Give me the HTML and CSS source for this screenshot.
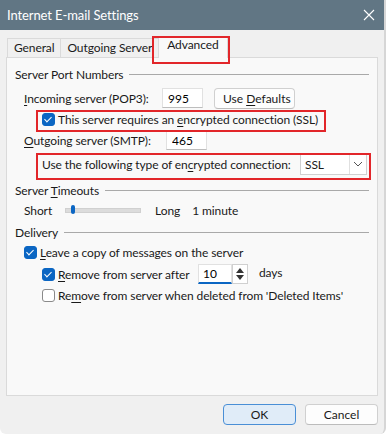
FILE: index.html
```html
<!DOCTYPE html>
<html lang="en">
<head>
    <meta charset="UTF-8">
    <title>Internet E-mail Settings</title>
    <link rel="stylesheet" href="styles.css">
</head>
<body>
    <div class="window">
        <div class="titlebar">
            <span class="title">Internet E-mail Settings</span>
            <svg class="close" width="12" height="12" viewBox="0 0 12 12"><path d="M1 1L11 11M11 1L1 11" stroke="#fff" stroke-width="1.1" fill="none"/></svg>
        </div>
        <div class="content">
            <div class="tabs">
                <div class="tab">General</div>
                <div class="tab">Outgoing Server</div>
                <div class="tab active">Advanced</div>
            </div>
            <div class="panel">
                <div class="group-title"><span>Server Port Numbers</span></div>
                <div class="row port-row">
                    <span class="label"><u>I</u>ncoming server (POP3):</span>
                    <input class="field port" type="text" value="995">
                    <button class="btn defaults">Use <u>D</u>efaults</button>
                </div>
                <label class="check sub">
                    <span class="box checked"></span>
                    <span>This server requires an <u>e</u>ncrypted connection (SSL)</span>
                </label>
                <div class="row port-row2">
                    <span class="label"><u>O</u>utgoing server (SMTP):</span>
                    <input class="field port" type="text" value="465">
                </div>
                <div class="row enc-row">
                    <span class="enc-label">Use the following type of en<u>c</u>rypted connection:</span>
                    <div class="select">
                        <span>SSL</span>
                        <span class="arrow"><svg width="10" height="6" viewBox="0 0 10 6"><path d="M1 1L5 5L9 1" stroke="#555" fill="none"/></svg></span>
                    </div>
                </div>

                <div class="group-title"><span>Server <u>T</u>imeouts</span></div>
                <div class="row timeout-row">
                    <span>Short</span>
                    <div class="slider"><span class="thumb"></span></div>
                    <span>Long</span>
                    <span class="minutes">1 minute</span>
                </div>

                <div class="group-title"><span>Delivery</span></div>
                <label class="check top">
                    <span class="box checked"></span>
                    <span><u>L</u>eave a copy of messages on the server</span>
                </label>
                <div class="row remove-row">
                    <label class="check">
                        <span class="box checked"></span>
                        <span><u>R</u>emove from server after</span>
                    </label>
                    <div class="spin">
                        <input class="spin-field" type="text" value="10">
                        <div class="spin-btns">
                            <svg width="8" height="5" viewBox="0 0 8 5"><path d="M0 5L4 0L8 5Z" fill="#333"/></svg>
                            <svg width="8" height="5" viewBox="0 0 8 5"><path d="M0 0L4 5L8 0Z" fill="#333"/></svg>
                        </div>
                    </div>
                    <span class="days">days</span>
                </div>
                <label class="check sub">
                    <span class="box"></span>
                    <span>Re<u>m</u>ove from server when deleted from 'Deleted Items'</span>
                </label>
            </div>
            <div class="footer">
                <button class="btn primary">OK</button>
                <button class="btn">Cancel</button>
            </div>
        </div>

        <div class="mark mark-tab"></div>
        <div class="mark mark-ssl"></div>
        <div class="mark mark-enc"></div>
    </div>
</body>
</html>
```

FILE: styles.css
```css
body {
    margin: 0;
    background-color: #ffffff;
    font-family: Lato, "Noto Sans", sans-serif;
    font-size: 12px;
    letter-spacing: -0.1px;
    color: #1a1a1a;
    white-space: nowrap;
}
u {
    text-decoration: underline;
    text-underline-offset: 2px;
}
.window {
    position: relative;
    width: 384px;
    height: 434px;
    background-color: #f0f0f0;
    border-right: 2px solid #d6d6d6;
    border-radius: 0 0 6px 6px;
    overflow: hidden;
}
.titlebar {
    height: 30px;
    background-color: #617684;
    color: #ffffff;
    display: flex;
    align-items: center;
    justify-content: space-between;
    padding: 0 9px 0 7px;
    font-size: 13px;
}
.content {
    padding: 0 6px 0 6px;
}
.tabs {
    display: flex;
    height: 27px;
    align-items: flex-end;
    padding-left: 1px;
}
.tab {
    height: 18px;
    line-height: 17px;
    padding: 0 6px;
    border: 1px solid #dadada;
    border-bottom: none;
    background-color: #f0f0f0;
    margin-right: -1px;
}
.tab.active {
    height: 21px;
    line-height: 16px;
    background-color: #f9f9f9;
    padding: 0 8px;
    position: relative;
    top: 1px;
}
.panel {
    height: 339px;
    background-color: #f9f9f9;
    border: 1px solid #dadada;
    padding: 8px 8px 0 8px;
    box-sizing: border-box;
}
.group-title {
    display: flex;
    align-items: center;
    height: 16px;
}
.group-title::after {
    content: "";
    flex: 1;
    height: 1px;
    background-color: #a9a9a9;
    margin: 0 0 0 6px;
}
.row {
    display: flex;
    align-items: center;
}
.label {
    width: 138px;
    margin-left: 9px;
}
.port-row {
    margin-top: 5px;
    height: 22px;
}
.port-row2 {
    height: 20px;
}
.port-row2 .label {
    width: 142px;
}
.field {
    font: inherit;
    border: 1px solid #e1e1e1;
    border-bottom: 1px solid #bdbdbd;
    background-color: #ffffff;
    height: 20px;
    box-sizing: border-box;
    padding: 0 5px;
    outline: none;
}
.port {
    width: 41px;
}
.btn {
    font: inherit;
    color: #1a1a1a;
    background-color: #fdfdfd;
    border: 1px solid #d0d0d0;
    border-bottom-color: #bcbcbc;
    border-radius: 4px;
    height: 21px;
    padding: 0 8px;
}
.defaults {
    margin-left: 11px;
    width: 81px;
}
.check {
    display: flex;
    align-items: center;
    gap: 3px;
    height: 21px;
}
.check.sub {
    margin-left: 27px;
}
.check.top {
    margin-left: 9px;
    margin-top: 2px;
}
.box {
    flex-shrink: 0;
    width: 13px;
    height: 13px;
    border: 1px solid #8a8a8a;
    border-radius: 3px;
    box-sizing: border-box;
    background-color: #ffffff;
    position: relative;
}
.box.checked {
    background-color: #0b66c3;
    border-color: #0b66c3;
}
.box.checked::after {
    content: "";
    position: absolute;
    left: 3px;
    top: 1px;
    width: 3px;
    height: 6px;
    border: solid #ffffff;
    border-width: 0 1.3px 1.3px 0;
    transform: rotate(45deg);
}
.enc-row {
    margin: 3px 0 0 27px;
    height: 22px;
}
.enc-label {
    width: 258px;
}
.select {
    width: 67px;
    height: 21px;
    box-sizing: border-box;
    border: 1px solid #d0d0d0;
    background-color: #ffffff;
    display: flex;
    align-items: center;
    justify-content: space-between;
    padding-left: 4px;
}
.arrow {
    width: 16px;
    height: 19px;
    border-left: 1px solid #e0e0e0;
    display: flex;
    align-items: center;
    justify-content: center;
}
.enc-row + .group-title {
    margin-top: 7px;
}
.timeout-row {
    height: 24px;
    margin-left: 9px;
    margin-bottom: 2px;
}
.slider {
    width: 74px;
    height: 3px;
    background-color: #dcdcdc;
    border: 1px solid #d0d0d0;
    margin: 0 14px 0 13px;
    position: relative;
}
.thumb {
    position: absolute;
    left: 5px;
    top: -4px;
    width: 4px;
    height: 9px;
    background-color: #0b66c3;
    border-radius: 2px;
}
.minutes {
    margin-left: 12px;
}
.remove-row {
    margin-left: 27px;
    margin-top: 1px;
    height: 20px;
}
.remove-row .check {
    width: 156px;
    flex-shrink: 0;
}
.spin {
    display: flex;
    align-items: center;
    height: 20px;
}
.spin-field {
    font: inherit;
    width: 34px;
    height: 20px;
    box-sizing: border-box;
    border: 1px solid #e1e1e1;
    border-bottom: 2px solid #0b66c3;
    padding: 0 4px;
    background-color: #ffffff;
    outline: none;
}
.spin-btns {
    width: 16px;
    height: 20px;
    box-sizing: border-box;
    border: 1px solid #d0d0d0;
    background-color: #ffffff;
    display: flex;
    flex-direction: column;
    align-items: center;
    justify-content: space-around;
    padding: 2px 0;
}
.days {
    margin-left: 11px;
    position: relative;
    top: -2px;
}
.remove-row + .check {
    margin-top: 1px;
}
.footer {
    display: flex;
    justify-content: flex-end;
    gap: 9px;
    padding-top: 8px;
}
.footer .btn {
    width: 73px;
    height: 21px;
}
.btn.primary {
    background-color: #e0ecf8;
    border-color: #4a8fd6;
}
.mark {
    position: absolute;
    border: 2px solid #e2262a;
    box-sizing: border-box;
}
.mark-tab {
    left: 152px;
    top: 36px;
    width: 78px;
    height: 28px;
}
.mark-ssl {
    left: 36px;
    top: 110px;
    width: 290px;
    height: 22px;
}
.mark-enc {
    left: 36px;
    top: 153px;
    width: 335px;
    height: 27px;
}
```
